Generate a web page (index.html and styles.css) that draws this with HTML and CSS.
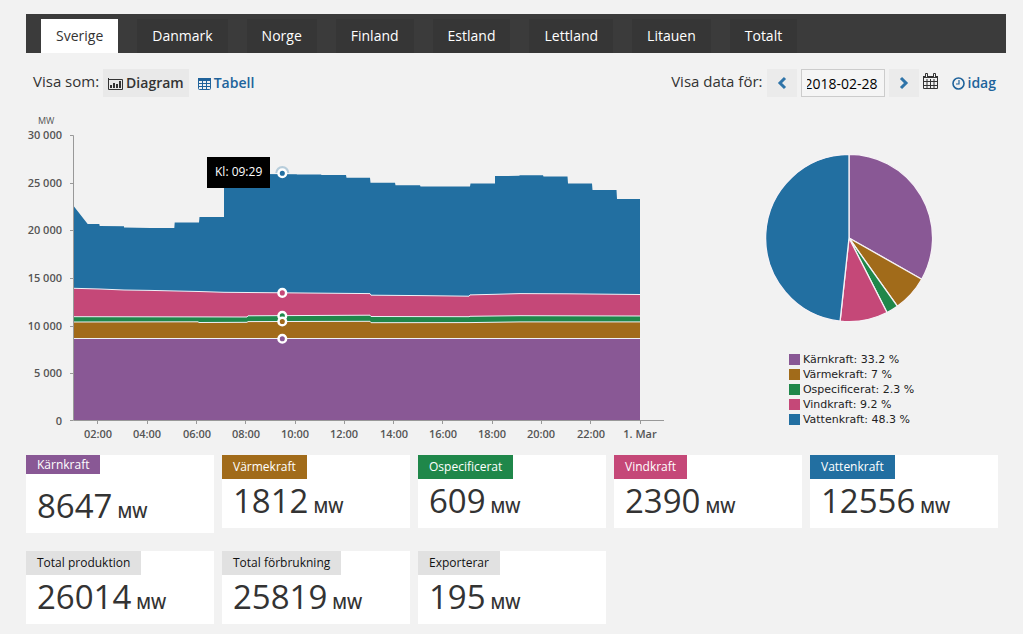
FILE: index.html
```html
<!DOCTYPE html>
<html lang="sv">
<head>
<meta charset="utf-8">
<title>Elproduktion</title>
<link rel="stylesheet" href="styles.css">
</head>
<body>
<main class="page">
  <nav class="tabs">
    <a class="tab tab-active" href="#sverige">Sverige</a>
    <a class="tab" href="#danmark">Danmark</a>
    <a class="tab" href="#norge">Norge</a>
    <a class="tab" href="#finland">Finland</a>
    <a class="tab" href="#estland">Estland</a>
    <a class="tab" href="#lettland">Lettland</a>
    <a class="tab" href="#litauen">Litauen</a>
    <a class="tab" href="#totalt">Totalt</a>
  </nav>

  <div class="controls">
    <div class="control-group">
      <span class="control-label">Visa som:</span>
      <button class="view view-active" type="button">
        <svg class="icon" width="15" height="12" viewBox="0 0 15 12" aria-hidden="true"><path d="M.5 0V11.500H14.500V1.500H.5" fill="none" stroke="currentColor"/><path d="M2 7h2v3H2zM5 5h2v5H5zM8 6h2v4H8zM11 3h2v7h-2z" fill="currentColor"/></svg>
        Diagram</button>
      <button class="view" type="button">
        <svg class="icon" width="13" height="12" viewBox="0 0 13 12" aria-hidden="true"><rect x=".5" y=".5" width="12" height="11" rx="1" fill="none" stroke="currentColor"/><path d="M0 0h13v3H0z" fill="currentColor"/><path d="M0 5.500h13M0 8.500h13M4.500 2v10M8.500 2v10" stroke="currentColor"/></svg>
        Tabell</button>
    </div>
    <div class="control-group">
      <label class="control-label" for="date">Visa data för:</label>
      <button class="step" type="button" aria-label="Föregående dag"><svg width="10" height="14" viewBox="0 0 10 14"><path d="M8 2 3 7l5 5" fill="none" stroke="currentColor" stroke-width="3"/></svg></button>
      <input class="date" id="date" type="text" value="2018-02-28">
      <button class="step" type="button" aria-label="Nästa dag"><svg width="10" height="14" viewBox="0 0 10 14"><path d="M2 2l5 5-5 5" fill="none" stroke="currentColor" stroke-width="3"/></svg></button>
      <button class="calendar" type="button" aria-label="Kalender"><svg width="15" height="16" viewBox="0 0 15 16"><path d="M.5 3.500h14v12H.5zM0 8.500h15M0 12.500h15M4 6v9M7.500 6v9M11 6v9" fill="none" stroke="currentColor"/><path d="M0 3h15v2H0z" fill="currentColor"/><path d="M2.500 .5h2v4h-2zM10.500 .5h2v4h-2z" fill="#f2f2f2" stroke="currentColor"/></svg></button>
      <a class="today" href="#idag"><svg class="icon" width="13" height="13" viewBox="0 0 13 13" aria-hidden="true"><circle cx="6.500" cy="6.500" r="5.500" fill="none" stroke="currentColor" stroke-width="1.600"/><path d="M7 3v4H4" fill="none" stroke="currentColor" stroke-width="1.200"/></svg>idag</a>
    </div>
  </div>

  <section class="charts">
    <svg class="area-chart" viewBox="26 109 644 335" role="img" aria-label="Produktion per timme, MW">
      <g stroke="#eef1f7" stroke-width="1">
        <path fill="#226fa1" stroke="none" d="M74 206.500 87.700 224H99.300L99.700 226 124 226.300V227.600L150 228H174.300L174.700 222.500H199L199.500 217H224V174L296.700 174.300 297 174.600H321L321.500 175H346L346.500 177.700H370L370.500 182.700H395L395.500 185.300H420L420.500 186.600H470L470.500 183.500H495V176L519 175.800 520 175.200H543L543.500 176.500H567.500L568 183.500H592L592.500 190H616.500L617 199H640V420H74Z"/>
        <path fill="#c54878" stroke="none" d="M74 288.300 100 289 124 290 150 290.400 199 291.500 224 292.300 282 292.800 370 293.600 371 295.200 420 295.600 469 296.200 470 294.900 495 294.300 520 293.600 568 293.800 640 294.500V420H74Z"/>
        <path fill="none" d="M74 288.300 100 289 124 290 150 290.400 199 291.500 224 292.300 282 292.800 370 293.600 371 295.200 420 295.600 469 296.200 470 294.900 495 294.300 520 293.600 568 293.800 640 294.500"/>
        <path fill="#1f874a" stroke="none" d="M74 316.700 199 316.900 247 317 248 315.800 370 315.200 371 316.500 469 316.700 470 316.300 520 315.700 640 316V420H74Z"/>
        <path fill="none" d="M74 316.700 199 316.900 247 317 248 315.800 370 315.200 371 316.500 469 316.700 470 316.300 520 315.700 640 316"/>
        <path fill="#a16b1a" stroke="none" d="M74 322 198 321.800 199 322.500 247 322.300 248 321.600 370 321.300 371 322.700 469 322.600 520 321.900H640V420H74Z"/>
        <path fill="none" d="M74 322 198 321.800 199 322.500 247 322.300 248 321.600 370 321.300 371 322.700 469 322.600 520 321.900H640"/>
        <path fill="#895895" stroke="none" d="M74 338.500H640V420H74Z"/>
        <path fill="none" d="M74 338.500H640"/>
      </g>
      <path class="axis" d="M70 135.500H73.500V420.500H664M70 183.500h3M70 230.500h3M70 278.500h3M70 326.500h3M70 373.500h3M70 420.500h3M97.500 421v3M147.500 421v3M196.500 421v3M245.500 421v3M295.500 421v3M344.500 421v3M393.500 421v3M442.500 421v3M492.500 421v3M541.500 421v3M590.500 421v3M640.500 421v3"/>
      <text class="unit" x="38" y="124">MW</text>
      <g class="tick tick-y">
        <text x="62" y="139">30 000</text>
        <text x="62" y="187">25 000</text>
        <text x="62" y="234">20 000</text>
        <text x="62" y="282">15 000</text>
        <text x="62" y="330">10 000</text>
        <text x="62" y="377">5 000</text>
        <text x="62" y="425">0</text>
      </g>
      <g class="tick tick-x">
        <text x="98" y="438">02:00</text>
        <text x="147" y="438">04:00</text>
        <text x="197" y="438">06:00</text>
        <text x="246" y="438">08:00</text>
        <text x="295" y="438">10:00</text>
        <text x="344" y="438">12:00</text>
        <text x="394" y="438">14:00</text>
        <text x="443" y="438">16:00</text>
        <text x="492" y="438">18:00</text>
        <text x="541" y="438">20:00</text>
        <text x="591" y="438">22:00</text>
        <text x="640" y="438">1. Mar</text>
      </g>
      <path d="M275.300 173A7 7 0 0 1 289.300 173Z" fill="#226fa1" opacity=".28"/>
      <g stroke="#fff" stroke-width="2.500">
        <circle cx="282.300" cy="173.300" r="3.800" fill="#226fa1"/>
        <circle cx="282.300" cy="292.900" r="3.800" fill="#c54878"/>
        <circle cx="282.300" cy="315.800" r="3.800" fill="#1f874a"/>
        <circle cx="282.300" cy="321.500" r="3.800" fill="#a16b1a"/>
        <circle cx="282.300" cy="338.700" r="3.800" fill="#895895"/>
      </g>
      <rect x="207" y="157" width="63" height="31"/>
      <text class="tip" x="215" y="176">Kl: 09:29</text>
    </svg>

    <div class="share">
      <svg class="pie" viewBox="-84 -84 168 168" role="img" aria-label="Andel per kraftslag">
        <g stroke="#f6f2f6" stroke-width="1.300" stroke-linejoin="round">
          <path fill="#895895" d="M0 0V-83.600A83.600 83.600 0 0 1 72.700 41.200Z"/>
          <path fill="#a16b1a" d="M0 0 72.700 41.200A83.600 83.600 0 0 1 48.300 68.200Z"/>
          <path fill="#1f874a" d="M0 0 48.300 68.200A83.600 83.600 0 0 1 38 74.500Z"/>
          <path fill="#c54878" d="M0 0 38 74.500A83.600 83.600 0 0 1 -8.900 83.100Z"/>
          <path fill="#226fa1" d="M0 0-8.900 83.100A83.600 83.600 0 0 1 0-83.600Z"/>
        </g>
      </svg>
      <ul class="legend">
        <li class="legend-item"><span class="swatch karn"></span>Kärnkraft: 33.2 %</li>
        <li class="legend-item"><span class="swatch varme"></span>Värmekraft: 7 %</li>
        <li class="legend-item"><span class="swatch ospec"></span>Ospecificerat: 2.3 %</li>
        <li class="legend-item"><span class="swatch vind"></span>Vindkraft: 9.2 %</li>
        <li class="legend-item"><span class="swatch vatten"></span>Vattenkraft: 48.3 %</li>
      </ul>
    </div>
  </section>

  <section class="cards">
    <article class="card card-first"><h2 class="badge karn">Kärnkraft</h2><p class="value">8647 <span class="mw">MW</span></p></article>
    <article class="card"><h2 class="badge varme">Värmekraft</h2><p class="value">1812 <span class="mw">MW</span></p></article>
    <article class="card"><h2 class="badge ospec">Ospecificerat</h2><p class="value">609 <span class="mw">MW</span></p></article>
    <article class="card"><h2 class="badge vind">Vindkraft</h2><p class="value">2390 <span class="mw">MW</span></p></article>
    <article class="card"><h2 class="badge vatten">Vattenkraft</h2><p class="value">12556 <span class="mw">MW</span></p></article>
    <article class="card"><h2 class="badge total">Total produktion</h2><p class="value">26014 <span class="mw">MW</span></p></article>
    <article class="card"><h2 class="badge total">Total förbrukning</h2><p class="value">25819 <span class="mw">MW</span></p></article>
    <article class="card"><h2 class="badge total">Exporterar</h2><p class="value">195 <span class="mw">MW</span></p></article>
  </section>
</main>
</body>
</html>
```

FILE: styles.css
```css
* { box-sizing: border-box; }

body {
  margin: 0;
  background: #f2f2f2;
  color: #333;
  font-family: "Open Sans", "Noto Sans", sans-serif;
  font-size: 14px;
}

button, input { font: inherit; }

button {
  border: 0;
  padding: 0;
  background: none;
  cursor: pointer;
}

svg { display: block; }

.page { padding: 14px 17px 10px 26px; }

.tabs {
  display: flex;
  gap: 19px;
  padding: 5px 15px 0;
  background: #3b3b3b;
}

.tab {
  padding: 0 15px;
  background: #363636;
  color: #fff;
  line-height: 34px;
  text-decoration: none;
}

.tab-active {
  background: #fff;
  color: #333;
}

.controls {
  display: flex;
  justify-content: space-between;
  padding: 16px 10px 0 7px;
}

.control-group {
  display: flex;
  align-items: center;
  gap: 4px;
}

.control-label {
  align-self: flex-start;
  font-size: 15px;
  line-height: 24px;
}

.view {
  display: flex;
  align-items: center;
  gap: 3px;
  height: 28px;
  padding: 0 5px 1px;
  color: #20639b;
  font-weight: 600;
}

.view-active {
  background: #e9e9e9;
  color: #333;
}

.icon { margin-top: 2px; }

.step {
  display: flex;
  align-items: center;
  justify-content: center;
  width: 30px;
  height: 28px;
  background: #ebebeb;
  color: #2f74a9;
}

.date {
  width: 84px;
  height: 28px;
  padding: 0 5px;
  border: 1px solid #ccc;
  background: #f5f5f5;
  color: #000;
  font-weight: 500;
  text-indent: -2px;
}

.calendar {
  padding-bottom: 4px;
  color: #333;
}

.today {
  display: flex;
  align-items: center;
  gap: 3px;
  margin-left: 10px;
  padding-bottom: 1px;
  color: #20639b;
  font-weight: 600;
  text-decoration: none;
}

.charts {
  display: grid;
  grid-template-columns: 644fr 313fr;
  gap: 23px;
  padding-top: 12px;
}

.area-chart { width: 100%; }

.axis {
  fill: none;
  stroke: #999;
}

.unit {
  fill: #555;
  font-size: 9px;
}

.tick {
  fill: #555;
  font-size: 11px;
  font-weight: 600;
}

.tick-y { text-anchor: end; }

.tick-x { text-anchor: middle; }

.tip {
  fill: #fff;
  font-size: 12px;
}

.share {
  display: flex;
  flex-direction: column;
  align-items: center;
  gap: 30px;
  padding: 45px 1px 0 0;
}

.pie { width: 168px; }

.legend {
  margin: 0;
  padding: 0 0 0 5px;
  list-style: none;
  color: #222;
  font: 11px/15px "DejaVu Sans", sans-serif;
}

.legend-item {
  display: flex;
  align-items: center;
  gap: 3px;
}

.swatch {
  width: 11px;
  height: 11px;
}

.karn { background: #895895; }
.varme { background: #a16b1a; }
.ospec { background: #1f874a; }
.vind { background: #c54878; }
.vatten { background: #226fa1; }

.cards {
  display: grid;
  grid-template-columns: repeat(5, 1fr);
  align-items: start;
  gap: 18px 8px;
  padding: 11px 8px 0 0;
}

.card { background: #fff; }

.badge {
  width: fit-content;
  margin: 0;
  padding: 0 11px;
  color: #fff;
  font-size: 12px;
  font-weight: 400;
  line-height: 24px;
}

.total {
  background: #e1e1e1;
  color: #111;
}

.value {
  display: flex;
  align-items: baseline;
  gap: 5px;
  margin: 0;
  padding: 0 11px 5px;
  font-size: 33px;
  line-height: 44px;
}

.mw {
  font-size: 16px;
  font-weight: 600;
  line-height: 20px;
}

.card-first .badge { line-height: 19px; }

.card-first .value { padding: 10px 11px 5px; }
```
